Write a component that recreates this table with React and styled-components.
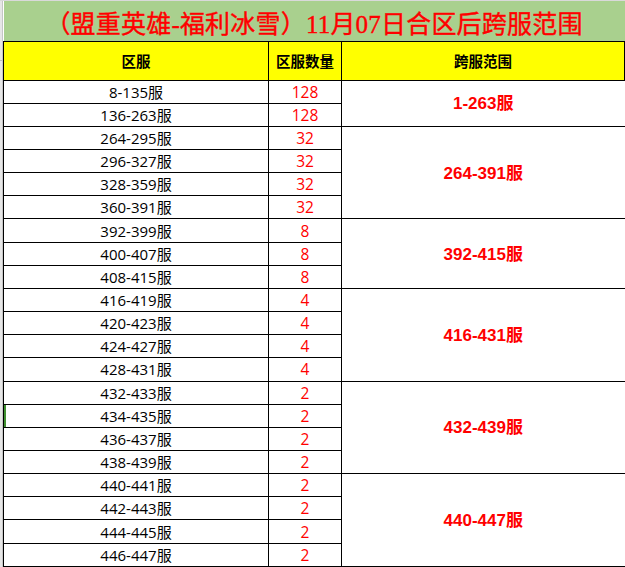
import React from 'react';
import styled, { createGlobalStyle } from 'styled-components';

const GlobalStyle = createGlobalStyle`
    html, body {
        margin: 0;
        padding: 0;
        background: #fff;
        overflow: hidden;
    }
`;

const groups = [
    { range: '1-263服', count: 128, rows: ['8-135服', '136-263服'] },
    { range: '264-391服', count: 32, rows: ['264-295服', '296-327服', '328-359服', '360-391服'] },
    { range: '392-415服', count: 8, rows: ['392-399服', '400-407服', '408-415服'] },
    { range: '416-431服', count: 4, rows: ['416-419服', '420-423服', '424-427服', '428-431服'] },
    { range: '432-439服', count: 2, rows: ['432-433服', '434-435服', '436-437服', '438-439服'] },
    { range: '440-447服', count: 2, rows: ['440-441服', '442-443服', '444-445服', '446-447服'] },
];

const Sheet = () => {
    return (
        <Page>
            <GlobalStyle />
            <Gutter>
                <GutterMark />
            </Gutter>
            <Table>
                <colgroup>
                    <col style={{ width: 265 }} />
                    <col style={{ width: 73 }} />
                    <col />
                </colgroup>
                <tbody>
                    <TitleRow>
                        <TitleCell colSpan={3}>（盟重英雄-福利冰雪）11月07日合区后跨服范围</TitleCell>
                    </TitleRow>
                    <HeadRow>
                        <HeadCell>区服</HeadCell>
                        <HeadCell>区服数量</HeadCell>
                        <HeadCell>跨服范围</HeadCell>
                    </HeadRow>
                    {groups.map(g =>
                        g.rows.map((r, i) => (
                            <Row key={r}>
                                <ServerCell selected={r === '434-435服'}>{r}</ServerCell>
                                <CountCell>{g.count}</CountCell>
                                {i === 0 && <RangeCell rowSpan={g.rows.length}>{g.range}</RangeCell>}
                            </Row>
                        ))
                    )}
                </tbody>
            </Table>
        </Page>
    );
};

const Page = styled.div`
    display: flex;
    width: 625px;
    height: 567px;
    overflow: hidden;
    border-top: 1px solid #d9d9d9;
    box-sizing: border-box;
`;

const Gutter = styled.div`
    position: relative;
    flex: 0 0 2px;
    background: #e6e6e6;
    border-right: 1px solid #c6c6c6;
`;

const GutterMark = styled.div`
    position: absolute;
    left: 0;
    right: 0;
    top: 59px;
    height: 1px;
    background: #bdbdbd;
`;

const Table = styled.table`
    flex: 1;
    border-collapse: collapse;
    table-layout: fixed;
    width: 622px;
    align-self: flex-start;
`;

const TitleRow = styled.tr`
    height: 40px;
`;

const TitleCell = styled.td`
    background: #a9d08e;
    color: #ff0000;
    font-family: 'Liberation Serif', 'Noto Sans CJK SC', serif;
    font-weight: normal;
    font-size: 25px;
    letter-spacing: 0.2px;
    text-align: center;
    padding: 2px 0 0;
    border-bottom: 1px solid #000;
    -webkit-text-stroke: 0.4px #ff0000;
`;

const HeadRow = styled.tr`
    height: 39px;
`;

const HeadCell = styled.td`
    background: #ffff00;
    color: #000;
    font-family: 'Noto Sans CJK SC', sans-serif;
    font-weight: bold;
    font-size: 14.5px;
    text-align: center;
    padding: 0;
    border: 1px solid #000;
`;

const Row = styled.tr`
    height: 23.17px;
`;

const Cell = styled.td`
    padding: 0;
    text-align: center;
    border: 1px solid #000;
    font-family: 'Open Sans', 'Noto Sans CJK SC', sans-serif;
    font-size: 15px;
    line-height: 20px;
`;

const ServerCell = styled(Cell)`
    color: #000;
    box-shadow: ${p => (p.selected ? 'inset 2px 0 0 #3f8f2f' : 'none')};
`;

const CountCell = styled(Cell)`
    color: #ff0000;
    font-size: 15.5px;
`;

const RangeCell = styled(Cell)`
    color: #ff0000;
    font-weight: bold;
    font-size: 17px;
    font-family: 'Liberation Sans', 'Noto Sans CJK SC', sans-serif;
    border-right: 0;
    padding-top: 2px;
`;

export default Sheet;
